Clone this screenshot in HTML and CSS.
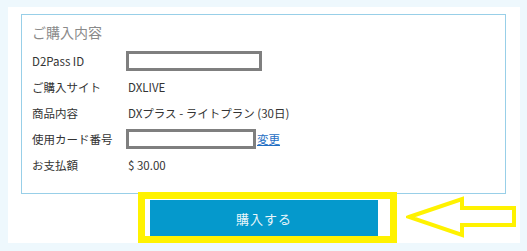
FILE: index.html
```html
<!DOCTYPE html>
<html lang="ja">
<head>
  <meta charset="UTF-8" />
  <meta name="viewport" content="width=device-width, initial-scale=1.0" />
  <title>ご購入内容</title>
  <link rel="stylesheet" href="styles.css">
</head>

<body>
  <div class="panel">
    <div class="summary">
      <h3>ご購入内容</h3>

      <div class="rows">
        <div class="label">D2Pass ID</div>
        <div class="value"><span class="masked"></span></div>

        <div class="label">ご購入サイト</div>
        <div class="value">DXLIVE</div>

        <div class="label">商品内容</div>
        <div class="value">DXプラス - ライトプラン (30日)</div>

        <div class="label">使用カード番号</div>
        <div class="value"><span class="masked short"></span><a href="#" class="change">変更</a></div>

        <div class="label">お支払額</div>
        <div class="value">$ 30.00</div>
      </div>
    </div>

    <div class="actions">
      <button class="btn">購入する</button>
    </div>

    <!-- annotation overlay -->
    <div class="highlight"></div>
    <svg class="arrow" width="112" height="42" viewBox="0 0 112 42">
      <polygon points="3,21 56,3 56,12 108,12 108,29 56,29 56,39" fill="none" stroke="#fff200" stroke-width="4" stroke-linejoin="miter" />
    </svg>
  </div>
</body>
</html>
```

FILE: styles.css
```css
body {
  margin: 0;
  padding: 7px 7px 0 8px;
  background: #eef8fd;
  font-family: "Noto Sans CJK JP", "Noto Sans", sans-serif;
  color: #333;
}

.panel {
  position: relative;
  width: 512px;
  height: 236px;
  padding: 7px 13px 0;
  box-sizing: border-box;
  background: #fff;
}

.summary {
  width: 485px;
  height: 180px;
  box-sizing: border-box;
  border: 1px solid #98cfe8;
  padding: 7px 10px 0;
}

.summary h3 {
  margin: 0 0 6px;
  font-size: 14px;
  font-weight: normal;
  line-height: 20px;
  color: #8a8a8a;
}

.rows {
  display: grid;
  grid-template-columns: 94px 1fr;
  grid-auto-rows: 26px;
  align-items: center;
  font-size: 11.5px;
}

.value {
  display: flex;
  align-items: center;
  padding-left: 2px;
}

.masked {
  display: inline-block;
  width: 130px;
  height: 14px;
  margin-left: -2px;
  border: 3px solid #7f7f7f;
  background: #fff;
}

.masked.short {
  width: 124px;
}

.change {
  margin-left: 1px;
  color: #1f6fc4;
  text-decoration: underline;
}

.actions {
  display: flex;
  justify-content: center;
  padding-top: 6px;
}

.btn {
  width: 228px;
  height: 36px;
  border: none;
  background: #0599cc;
  color: #eaf6fb;
  font-family: inherit;
  font-size: 13px;
  letter-spacing: 1px;
  cursor: pointer;
}

.highlight {
  position: absolute;
  left: 130px;
  top: 185px;
  width: 245px;
  height: 37px;
  border: 7px solid #fff200;
}

.arrow {
  position: absolute;
  left: 398px;
  top: 189px;
}
```
